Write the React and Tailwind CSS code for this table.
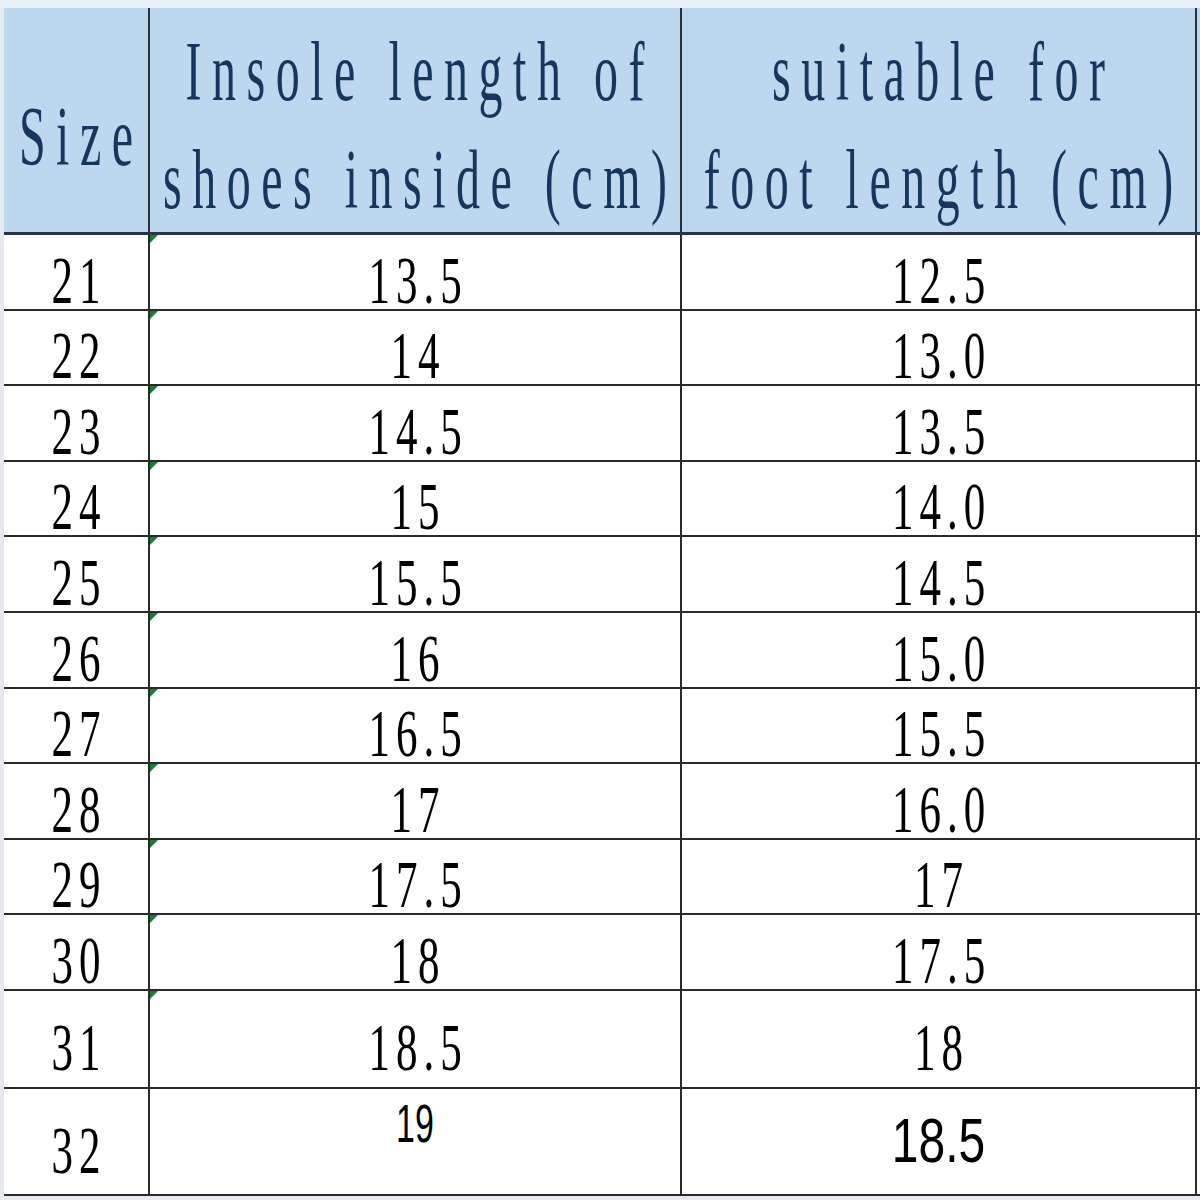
import React from 'react';

const rows = [
    ['21', '13.5', '12.5'],
    ['22', '14', '13.0'],
    ['23', '14.5', '13.5'],
    ['24', '15', '14.0'],
    ['25', '15.5', '14.5'],
    ['26', '16', '15.0'],
    ['27', '16.5', '15.5'],
    ['28', '17', '16.0'],
    ['29', '17.5', '17'],
    ['30', '18', '17.5'],
];

const serif = "font-['Liberation_Serif','Times_New_Roman',serif]";
const sans = "font-['Liberation_Sans',Arial,sans-serif]";

// number cell text, scaled tall like the stretched spreadsheet picture
const Num = ({ children, offset = 'mb-[-1px]' }) => (
    <span className={`${serif} inline-block pl-[6px] text-[43px] tracking-[6px] leading-none text-black origin-[50%_83.75%] scale-y-[1.56] ${offset}`}>
        {children}
    </span>
);

// little green "number stored as text" marker
const Marker = () => (
    <span className="absolute left-0 top-0 w-0 h-0 border-t-[8px] border-t-[#1e7a36] border-r-[8px] border-r-transparent"></span>
);

const HeaderText = ({ lines }) => (
    <div className={`${serif} pl-[10.5px] text-[48px] tracking-[10.5px] leading-[62px] text-[#17365d] text-center whitespace-pre scale-y-[1.75] translate-y-[6px]`}>
        {lines.map((l, i) => (
            <div key={i}>{l}</div>
        ))}
    </div>
);

export default function App() {
    return (
        <div className="w-[1200px] h-[1200px] bg-[#e6eaef] overflow-hidden">
            <div className="h-[8px] bg-[#e9f1f9]"></div>
            <div className="pl-[4px]">
                {/* header */}
                <div className="flex h-[227px] bg-[#bdd7ee] border-b-[3px] border-[#2b3444]">
                    <div className="w-[146px] border-r-2 border-[#2a2f38] flex items-center justify-center">
                        <div className="translate-y-[11px]">
                            <HeaderText lines={['Size']} />
                        </div>
                    </div>
                    <div className="w-[532px] border-r-2 border-[#2a2f38] flex items-center justify-center">
                        <HeaderText lines={['Insole length of', 'shoes inside (cm)']} />
                    </div>
                    <div className="w-[515px] border-r-2 border-[#2a2f38] flex items-center justify-center">
                        <HeaderText lines={['suitable for', 'foot length (cm)']} />
                    </div>
                </div>

                {/* body */}
                <div className="bg-white">
                    {rows.map((r, idx) => (
                        <div key={idx} className="flex h-[75.6px] border-b-2 border-[#2a2a2a]">
                            <div className="w-[146px] border-r-2 border-[#2a2a2a] flex items-end justify-center">
                                <Num>{r[0]}</Num>
                            </div>
                            <div className="relative w-[532px] border-r-2 border-[#2a2a2a] flex items-end justify-center">
                                <Marker />
                                <Num>{r[1]}</Num>
                            </div>
                            <div className="w-[515px] border-r-2 border-[#2a2a2a] flex items-end justify-center">
                                <Num>{r[2]}</Num>
                            </div>
                        </div>
                    ))}

                    <div className="flex h-[98px] border-b-2 border-[#2a2a2a]">
                        <div className="w-[146px] border-r-2 border-[#2a2a2a] flex items-end justify-center">
                            <Num offset="mb-[10px]">31</Num>
                        </div>
                        <div className="relative w-[532px] border-r-2 border-[#2a2a2a] flex items-end justify-center">
                            <Marker />
                            <Num offset="mb-[10px]">18.5</Num>
                        </div>
                        <div className="w-[515px] border-r-2 border-[#2a2a2a] flex items-end justify-center">
                            <Num offset="mb-[10px]">18</Num>
                        </div>
                    </div>

                    <div className="flex h-[107px] border-b-2 border-[#2a2a2a]">
                        <div className="w-[146px] border-r-2 border-[#2a2a2a] flex items-end justify-center">
                            <Num offset="mb-[14px]">32</Num>
                        </div>
                        <div className="w-[532px] border-r-2 border-[#2a2a2a] flex items-start justify-center pt-[7px]">
                            <span className={`${sans} inline-block text-[34px] leading-none text-black origin-top scale-y-[1.6]`}>
                                19
                            </span>
                        </div>
                        <div className="w-[515px] border-r-2 border-[#2a2a2a] flex items-end justify-center">
                            <span className={`${sans} inline-block text-[48px] leading-none text-black origin-[50%_84.6%] scale-y-[1.3] mb-[24px]`}>
                                18.5
                            </span>
                        </div>
                    </div>
                </div>
            </div>
        </div>
    );
}
